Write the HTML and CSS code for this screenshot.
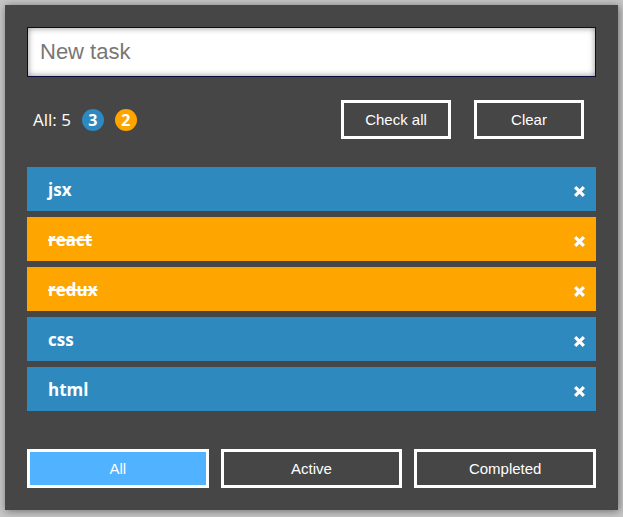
FILE: index.html
```html
<!DOCTYPE html>
<html>
<head>
<meta charset="utf-8">
<link rel="stylesheet" href="styles.css">
</head>
<body>
<div class="panel">
  <input class="new-task" type="text" placeholder="New task">
  <div class="stats">
    <span class="total">All: 5</span>
    <span class="badge badge-active">3</span>
    <span class="badge badge-done">2</span>
    <button class="btn btn-check">Check all</button>
    <button class="btn btn-clear">Clear</button>
  </div>
  <ul class="list">
    <li class="item"><span class="label">jsx</span><svg class="close" viewBox="0 0 12 12"><path d="M2 2L10 10M10 2L2 10"/></svg></li>
    <li class="item done"><span class="label">react</span><svg class="close" viewBox="0 0 12 12"><path d="M2 2L10 10M10 2L2 10"/></svg></li>
    <li class="item done"><span class="label">redux</span><svg class="close" viewBox="0 0 12 12"><path d="M2 2L10 10M10 2L2 10"/></svg></li>
    <li class="item"><span class="label">css</span><svg class="close" viewBox="0 0 12 12"><path d="M2 2L10 10M10 2L2 10"/></svg></li>
    <li class="item"><span class="label">html</span><svg class="close" viewBox="0 0 12 12"><path d="M2 2L10 10M10 2L2 10"/></svg></li>
  </ul>
  <div class="filters">
    <button class="btn filter selected">All</button>
    <button class="btn filter">Active</button>
    <button class="btn filter">Completed</button>
  </div>
</div>
</body>
</html>
```
FILE: styles.css
```css
html, body {
  margin: 0;
  padding: 0;
}
body {
  background: #c6c6c6;
  width: 623px;
  height: 517px;
  overflow: hidden;
}
.panel {
  margin: 5px 0 0 5px;
  width: 613px;
  height: 505px;
  box-sizing: border-box;
  padding: 22px;
  background: #464646;
  box-shadow: 1px 1px 8px rgba(0, 0, 0, 0.45);
  display: flex;
  flex-direction: column;
}
.new-task {
  display: block;
  width: 100%;
  height: 50px;
  box-sizing: border-box;
  border: 1px solid #0b0b3a;
  box-shadow: inset 0 0 6px rgba(0, 0, 0, 0.45);
  background: #fff;
  padding: 0 12px;
  font-family: "Liberation Sans", Arial, sans-serif;
  font-size: 22px;
  color: #333;
  outline: none;
}
.new-task::placeholder {
  color: #777;
}
.stats {
  margin-top: 23px;
  height: 39px;
  display: flex;
  align-items: center;
}
.total {
  margin-left: 6px;
  font-family: "Open Sans", sans-serif;
  font-size: 17px;
  color: #fff;
}
.badge {
  width: 22px;
  height: 22px;
  border-radius: 50%;
  margin-left: 11px;
  display: flex;
  align-items: center;
  justify-content: center;
  font-family: "Open Sans", sans-serif;
  font-weight: 700;
  font-size: 16px;
  color: #fff;
}
.badge-active {
  background: #2e89bf;
}
.badge-done {
  background: #ffa500;
}
.btn {
  height: 39px;
  box-sizing: border-box;
  border: 3px solid #fff;
  background: transparent;
  color: #fff;
  font-family: "Liberation Sans", Arial, sans-serif;
  font-size: 15px;
  padding: 0;
  margin: 0;
}
.btn-check {
  margin-left: auto;
  width: 110px;
}
.btn-clear {
  margin-left: 23px;
  margin-right: 12px;
  width: 110px;
}
.list {
  list-style: none;
  margin: 28px 0 0 0;
  padding: 0;
  display: flex;
  flex-direction: column;
  gap: 6px;
}
.item {
  height: 44px;
  background: #2e89bf;
  display: flex;
  align-items: center;
  padding: 0 10px 0 21px;
  font-family: "Open Sans", sans-serif;
  font-weight: 700;
  font-size: 17px;
  color: #fff;
}
.item.done {
  background: #ffa500;
}
.label {
  display: inline-block;
}
.item.done .label {
  text-decoration-line: line-through;
  text-decoration-color: #fff;
  text-decoration-thickness: 2px;
}
.close {
  margin-left: auto;
  margin-top: 4px;
  width: 13px;
  height: 13px;
  fill: none;
  stroke: #fff;
  stroke-width: 3;
}
.filters {
  margin-top: auto;
  display: flex;
  gap: 12px;
}
.filter {
  flex: 1;
}
.filter.selected {
  background: #51b2ff;
}
```
